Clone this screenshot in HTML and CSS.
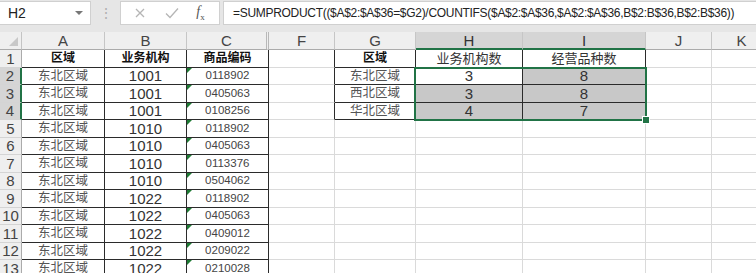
FILE: index.html
```html
<!DOCTYPE html>
<html lang="zh-CN">
<head>
    <meta charset="UTF-8">
    <meta name="viewport" content="width=device-width, initial-scale=1.0">
    <title>SUMPRODUCT</title>
    <link rel="stylesheet" href="styles.css">
</head>
<body>
    <div class="formula-bar">
        <div class="name-box">
            <span>H2</span>
            <span class="caret"></span>
        </div>
        <div class="grip">&#8942;</div>
        <div class="fx-box">
            <svg width="14" height="14" viewBox="0 0 14 14"><path d="M3 3l8 8M11 3l-8 8" stroke="#b5b5b5" stroke-width="1.3" fill="none"/></svg>
            <svg width="16" height="14" viewBox="0 0 16 14"><path d="M2 7.5l4 4 8-9" stroke="#b5b5b5" stroke-width="1.3" fill="none"/></svg>
            <span class="fx"><i>f</i><sub>x</sub></span>
        </div>
        <div class="formula">=SUMPRODUCT(($A$2:$A$36=$G2)/COUNTIFS($A$2:$A$36,$A$2:$A$36,B$2:B$36,B$2:B$36))</div>
    </div>

    <div class="sheet">
        <!-- column headers -->
        <div class="c corner"></div>
        <div class="c ch">A</div>
        <div class="c ch">B</div>
        <div class="c ch hidden-next">C</div>
        <div class="c ch">F</div>
        <div class="c ch">G</div>
        <div class="c ch sel">H</div>
        <div class="c ch sel">I</div>
        <div class="c ch">J</div>
        <div class="c ch">K</div>

        <!-- row 1 -->
        <div class="c rh">1</div>
        <div class="c tb bold">区域</div>
        <div class="c tb bold">业务机构</div>
        <div class="c tb bold">商品编码</div>
        <div class="c tl"></div>
        <div class="c tb bold">区域</div>
        <div class="c tb head">业务机构数</div>
        <div class="c tb head">经营品种数</div>
        <div class="c"></div>
        <div class="c"></div>

        <!-- row 2 -->
        <div class="c rh sel">2</div>
        <div class="c tb area">东北区域</div>
        <div class="c tb num">1001</div>
        <div class="c tb code">0118902</div>
        <div class="c tl"></div>
        <div class="c tb area">东北区域</div>
        <div class="c tb num">3</div>
        <div class="c tb num fill">8</div>
        <div class="c"></div>
        <div class="c"></div>

        <!-- row 3 -->
        <div class="c rh sel">3</div>
        <div class="c tb area">东北区域</div>
        <div class="c tb num">1001</div>
        <div class="c tb code">0405063</div>
        <div class="c tl"></div>
        <div class="c tb area">西北区域</div>
        <div class="c tb num fill">3</div>
        <div class="c tb num fill">8</div>
        <div class="c"></div>
        <div class="c"></div>

        <!-- row 4 -->
        <div class="c rh sel">4</div>
        <div class="c tb area">东北区域</div>
        <div class="c tb num">1001</div>
        <div class="c tb code">0108256</div>
        <div class="c tl"></div>
        <div class="c tb area">华北区域</div>
        <div class="c tb num fill">4</div>
        <div class="c tb num fill">7</div>
        <div class="c"></div>
        <div class="c"></div>

        <!-- row 5 -->
        <div class="c rh">5</div>
        <div class="c tb area">东北区域</div>
        <div class="c tb num">1010</div>
        <div class="c tb code">0118902</div>
        <div class="c"></div><div class="c"></div><div class="c"></div><div class="c"></div><div class="c"></div><div class="c"></div>

        <!-- row 6 -->
        <div class="c rh">6</div>
        <div class="c tb area">东北区域</div>
        <div class="c tb num">1010</div>
        <div class="c tb code">0405063</div>
        <div class="c"></div><div class="c"></div><div class="c"></div><div class="c"></div><div class="c"></div><div class="c"></div>

        <!-- row 7 -->
        <div class="c rh">7</div>
        <div class="c tb area">东北区域</div>
        <div class="c tb num">1010</div>
        <div class="c tb code">0113376</div>
        <div class="c"></div><div class="c"></div><div class="c"></div><div class="c"></div><div class="c"></div><div class="c"></div>

        <!-- row 8 -->
        <div class="c rh">8</div>
        <div class="c tb area">东北区域</div>
        <div class="c tb num">1010</div>
        <div class="c tb code">0504062</div>
        <div class="c"></div><div class="c"></div><div class="c"></div><div class="c"></div><div class="c"></div><div class="c"></div>

        <!-- row 9 -->
        <div class="c rh">9</div>
        <div class="c tb area">东北区域</div>
        <div class="c tb num">1022</div>
        <div class="c tb code">0118902</div>
        <div class="c"></div><div class="c"></div><div class="c"></div><div class="c"></div><div class="c"></div><div class="c"></div>

        <!-- row 10 -->
        <div class="c rh">10</div>
        <div class="c tb area">东北区域</div>
        <div class="c tb num">1022</div>
        <div class="c tb code">0405063</div>
        <div class="c"></div><div class="c"></div><div class="c"></div><div class="c"></div><div class="c"></div><div class="c"></div>

        <!-- row 11 -->
        <div class="c rh">11</div>
        <div class="c tb area">东北区域</div>
        <div class="c tb num">1022</div>
        <div class="c tb code">0409012</div>
        <div class="c"></div><div class="c"></div><div class="c"></div><div class="c"></div><div class="c"></div><div class="c"></div>

        <!-- row 12 -->
        <div class="c rh">12</div>
        <div class="c tb area">东北区域</div>
        <div class="c tb num">1022</div>
        <div class="c tb code">0209022</div>
        <div class="c"></div><div class="c"></div><div class="c"></div><div class="c"></div><div class="c"></div><div class="c"></div>

        <!-- row 13 -->
        <div class="c rh">13</div>
        <div class="c tb area">东北区域</div>
        <div class="c tb num">1022</div>
        <div class="c tb code">0210028</div>
        <div class="c"></div><div class="c"></div><div class="c"></div><div class="c"></div><div class="c"></div><div class="c"></div>

        <!-- selection H2:I4 -->
        <div class="selection"><span class="handle"></span></div>
    </div>
</body>
</html>
```

FILE: styles.css
```css
body {
    margin: 0;
    width: 756px;
    height: 273px;
    overflow: hidden;
    background-color: #e6e6e6;
    font-family: 'Liberation Sans', 'Noto Sans CJK SC', sans-serif;
    color: #333;
}

/* formula bar */
.formula-bar {
    display: flex;
    align-items: stretch;
    height: 24px;
    padding: 1px 0;
}

.name-box {
    width: 91px;
    background-color: #fff;
    border: 1px solid #d0d0d0;
    border-left: none;
    display: flex;
    align-items: center;
    justify-content: space-between;
    padding: 0 7px 0 8px;
    box-sizing: border-box;
    font-size: 14px;
    color: #222;
}

.caret {
    width: 0;
    height: 0;
    border-left: 4px solid transparent;
    border-right: 4px solid transparent;
    border-top: 4px solid #777;
}

.grip {
    width: 29px;
    display: flex;
    align-items: center;
    justify-content: center;
    color: #b0b0b0;
    font-size: 14px;
}

.fx-box {
    width: 100px;
    background-color: #fff;
    border: 1px solid #d0d0d0;
    box-sizing: border-box;
    display: flex;
    align-items: center;
    justify-content: space-around;
    padding: 0 6px 0 4px;
}

.fx {
    font-family: 'Liberation Serif', serif;
    font-size: 14px;
    color: #555;
}

.fx sub {
    font-size: 9px;
}

.formula {
    flex: 1;
    margin-left: 3px;
    background-color: #fff;
    border: 1px solid #d0d0d0;
    border-right: none;
    display: flex;
    align-items: center;
    padding-left: 9px;
    font-size: 12px;
    letter-spacing: -0.3px;
    color: #222;
    white-space: nowrap;
    overflow: hidden;
}

/* sheet grid */
.sheet {
    margin-top: 6px;
    position: relative;
    display: grid;
    grid-template-columns: 22px 83px 82px 82px 66px 81px 107px 123px 66px 60px;
    grid-template-rows: 18px repeat(13, 17.5px);
    background-color: #fff;
}

.c {
    box-sizing: border-box;
    border-right: 1px solid #dadada;
    border-bottom: 1px solid #dadada;
    display: flex;
    align-items: center;
    justify-content: center;
    white-space: nowrap;
    overflow: hidden;
    position: relative;
    font-size: 14px;
    line-height: 1;
}

.corner {
    background-color: #efefef;
    border-right-color: #c4c4c4;
    border-bottom-color: #ababab;
}

.corner::after {
    content: '';
    position: absolute;
    right: 3px;
    bottom: 3px;
    border-left: 9px solid transparent;
    border-bottom: 9px solid #c8c8c8;
}

.ch {
    background-color: #efefef;
    border-right-color: #c6c6c6;
    border-bottom-color: #ababab;
    color: #444;
    font-size: 15px;
}

.ch.hidden-next {
    border-right: 3px double #b8b8b8;
}

.ch.sel {
    background-color: #d5d5d5;
    border-bottom: 2px solid #217346;
    color: #333;
}

.rh {
    background-color: #efefef;
    border-right-color: #ababab;
    border-bottom-color: #d4d4d4;
    color: #444;
    font-size: 15px;
}

.rh.sel {
    background-color: #d5d5d5;
    border-right: 2px solid #217346;
}

/* bordered tables */
.tb {
    border-right-color: #2b2b2b;
    border-bottom-color: #2b2b2b;
}

.tl {
    border-right-color: #2b2b2b;
}

.bold {
    font-weight: bold;
    font-size: 12px;
    color: #111;
}

.head {
    font-size: 13px;
    color: #333;
}

.area {
    font-size: 12.5px;
    color: #555;
}

.num {
    font-size: 15px;
    color: #333;
}

.code {
    font-size: 11.5px;
    color: #444;
}

.code::before {
    content: '';
    position: absolute;
    left: 0;
    top: 0;
    border-top: 5px solid #1e7b34;
    border-right: 5px solid transparent;
}

.fill {
    background-color: #c8c8c8;
}

/* selection frame over H2:I4 */
.selection {
    grid-column: 7 / 9;
    grid-row: 3 / 6;
    position: absolute;
    top: -1px;
    right: -1px;
    bottom: -1px;
    left: -2px;
    border: 2px solid #217346;
    pointer-events: none;
}

.handle {
    position: absolute;
    right: -5px;
    bottom: -5px;
    width: 6px;
    height: 6px;
    background-color: #217346;
    border: 1px solid #fff;
}
```
